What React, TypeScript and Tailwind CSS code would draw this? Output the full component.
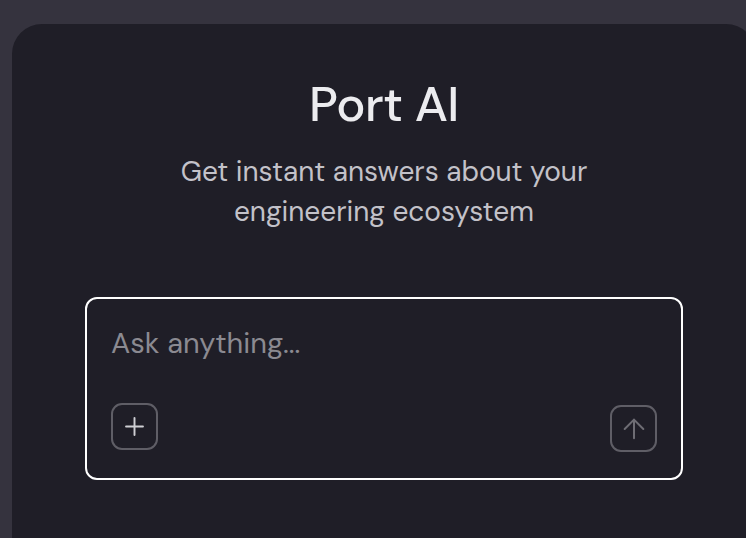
import React from 'react';
import { Plus, ArrowUp } from 'lucide-react';

const App: React.FC = () => {
  return (
    <div className="h-[538px] w-[746px] overflow-hidden bg-[#35333e] pt-6 pl-3" style={{ fontFamily: '"DM Sans", Inter, "Noto Sans", sans-serif' }}>
      <div className="w-[744px] h-[600px] rounded-[30px] bg-[#1f1e27] flex flex-col items-center pt-[52px]">
        <h1 className="text-[49px] leading-[56px] font-medium text-[#ececef] tracking-[-0.5px]">Port AI</h1>
        <p className="mt-[20px] text-[28px] leading-[40px] text-[#c3c2c9] text-center">
          Get instant answers about your
          <br />
          engineering ecosystem
        </p>
        <div className="mt-[65px] w-[598px] h-[183px] rounded-[12px] border-2 border-white flex flex-col justify-between px-6 pt-[26px] pb-[28px]">
          <div className="text-[29px] leading-[36px] text-[#8b8a91]">Ask anything...</div>
          <div className="flex items-end justify-between">
            <button className="w-[47px] h-[47px] rounded-[11px] border-2 border-[#5f5e66] flex items-center justify-center text-[#cfcfd4]">
              <Plus size={29} strokeWidth={1.6} />
            </button>
            <button className="w-[47px] h-[47px] rounded-[11px] border-2 border-[#5f5e66] flex items-center justify-center text-[#6e6d74] -mb-[2px]">
              <ArrowUp size={32} strokeWidth={1.5} />
            </button>
          </div>
        </div>
      </div>
    </div>
  );
};

export default App;
